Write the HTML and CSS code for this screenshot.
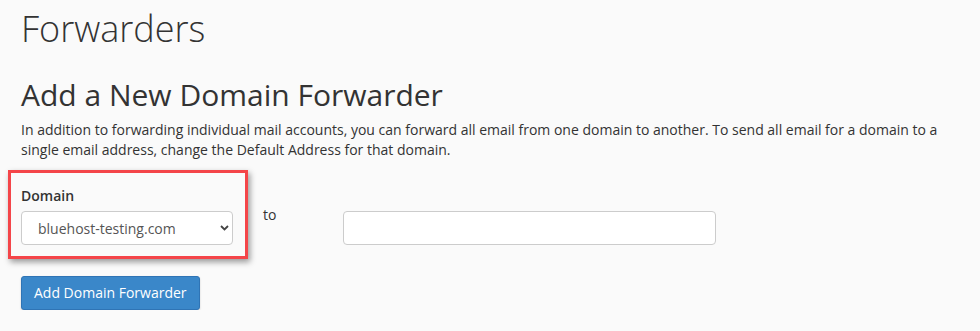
FILE: index.html
```html
<!DOCTYPE html>
<html>
<title>Forwarders</title>

<head>
    <link rel="stylesheet" href="styles.css">
</head>

<body>

    <div class="page">
        <h1>Forwarders</h1>

        <h2>Add a New Domain Forwarder</h2>
        <p>In addition to forwarding individual mail accounts, you can forward all email from one domain to another. To send all email for a domain to a single email address, change the Default Address for that domain.</p>

        <form class="forwarder-form">
            <div class="form-row">
                <!-- highlighted field -->
                <div class="field highlight">
                    <label for="ddomain">Domain</label>
                    <span class="select-wrap">
                        <select id="ddomain" class="form-control">
                            <option>bluehost-testing.com</option>
                        </select>
                        <svg class="chevron" width="9" height="6" viewBox="0 0 9 6">
                            <path d="M1 1 L4.5 4.5 L8 1" fill="none" stroke="#444" stroke-width="1.8"/>
                        </svg>
                    </span>
                </div>

                <div class="to">to</div>

                <div class="field">
                    <input type="text" class="form-control dest" id="forward">
                </div>
            </div>

            <button type="button" class="btn btn-primary">Add Domain Forwarder</button>
        </form>
    </div>

</body>

</html>
```

FILE: styles.css
```css
* {
    box-sizing: border-box;
}

body {
    margin: 0;
    background-color: #fafafa;
    font-family: "Open Sans", "Liberation Sans", sans-serif;
    font-size: 14px;
    line-height: 20px;
    color: #333;
}

.page {
    padding: 0 21px;
}

h1 {
    margin: 9px 0 0;
    font-size: 36px;
    line-height: 40px;
    font-weight: 300;
    color: #333;
}

h2 {
    margin: 29px 0 0;
    font-size: 30px;
    line-height: 33px;
    font-weight: 400;
    color: #333;
}

p {
    margin: 9px 0 0;
}

/* The form row */

.form-row {
    display: flex;
    align-items: flex-end;
    margin-top: 10px;
}

.field label {
    display: block;
    font-weight: 600;
    margin-bottom: 5px;
}

/* Red annotation box round the domain field */

.highlight {
    margin-left: -13px;
    padding: 13px 12px 11px 10px;
    border: 3px solid #f44549;
    box-shadow: 2px 3px 6px rgba(0, 0, 0, 0.4);
}

.to {
    width: 95px;
    padding-left: 15px;
    align-self: flex-end;
    margin-bottom: 34px;
}

.form-control {
    display: block;
    height: 34px;
    border: 1px solid #ccc;
    border-radius: 4px;
    background-color: #fff;
    font-family: inherit;
    font-size: 14px;
    color: #555;
}

.select-wrap {
    position: relative;
    display: block;
}

select.form-control {
    width: 212px;
    padding: 0 12px 0 16px;
    -webkit-appearance: none;
    appearance: none;
}

.chevron {
    position: absolute;
    right: 4px;
    top: 14px;
}

.dest {
    width: 373px;
    margin-bottom: 14px;
    padding: 6px 12px;
}

/* Submit button */

.btn {
    display: block;
    margin-top: 17px;
    height: 34px;
    padding: 6px 12px;
    border: 1px solid #2f74b5;
    border-radius: 3px;
    background-color: #3a87c9;
    color: #fff;
    font-family: inherit;
    font-size: 14px;
    line-height: 20px;
    box-shadow: 0 1px 2px rgba(0, 0, 0, 0.2);
}
```
